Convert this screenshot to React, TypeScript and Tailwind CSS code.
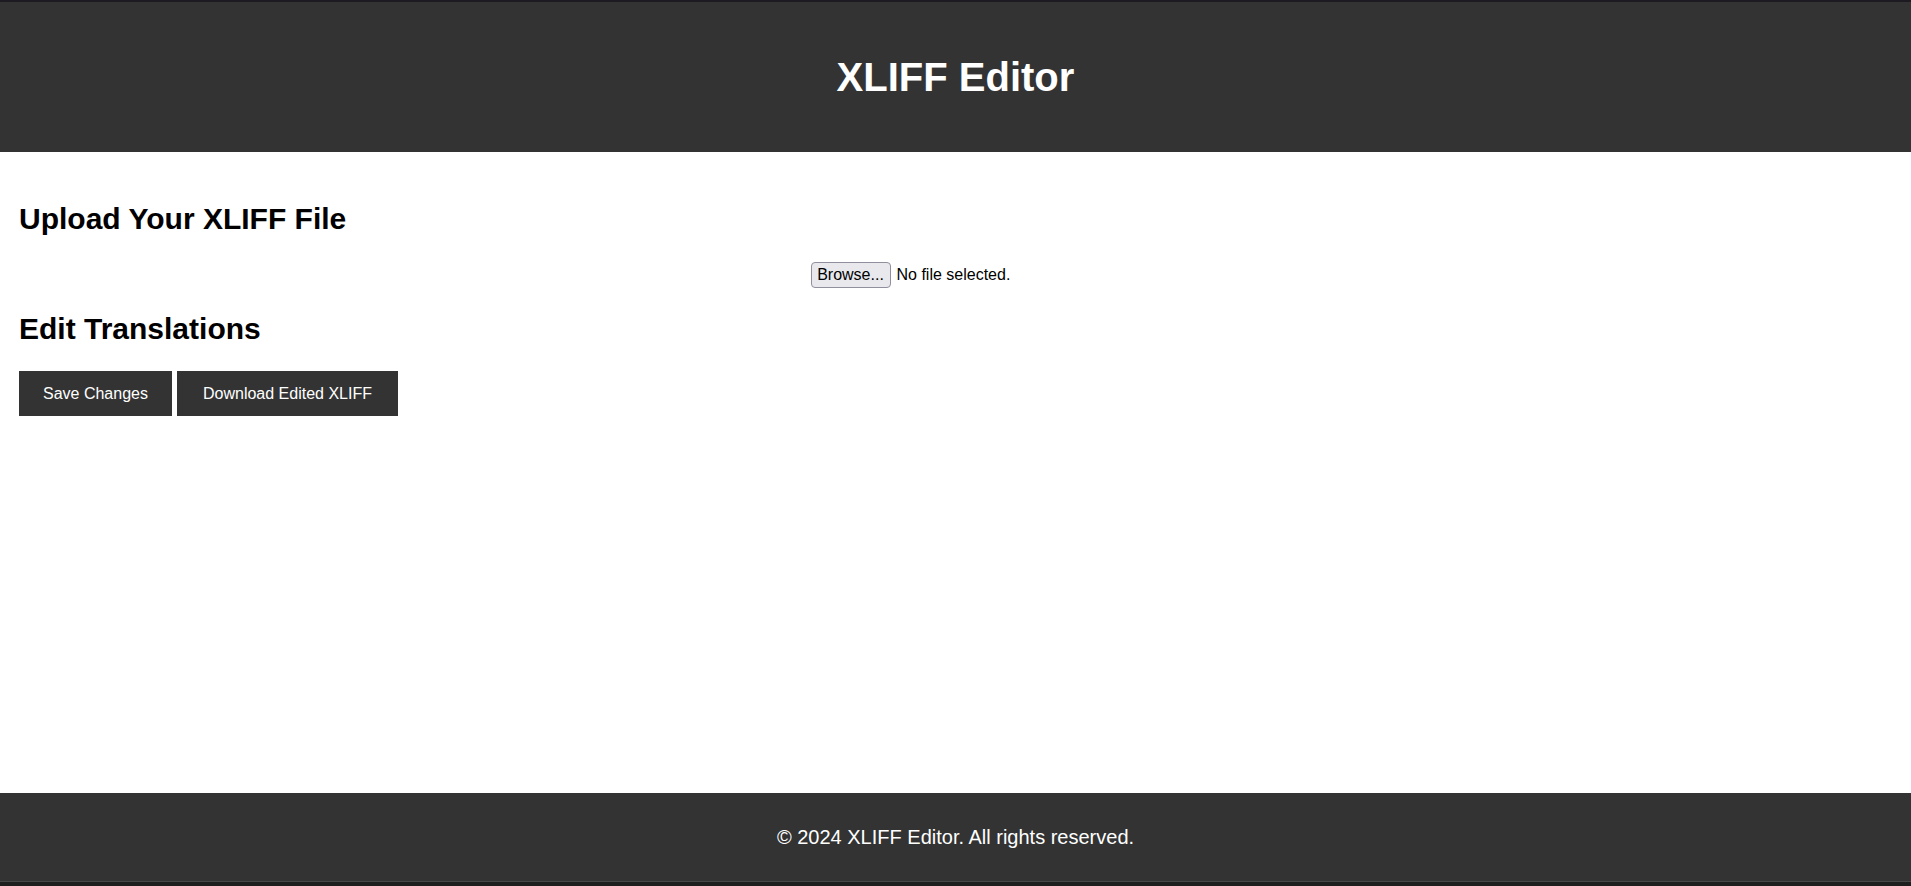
export default function App() {
  return (
    <div className="h-screen flex flex-col bg-white border-t-2 border-[#1d1b21] font-['Liberation_Sans',Arial,sans-serif] text-black">
      {/* Header */}
      <header className="h-[150px] shrink-0 bg-[#333333] flex items-center justify-center">
        <h1 className="text-[40px] leading-none font-bold text-white">XLIFF Editor</h1>
      </header>

      {/* Main */}
      <main className="flex-1 px-[19px] pt-[50px]">
        <h2 className="text-[30px] leading-[34px] font-bold">Upload Your XLIFF File</h2>

        <div className="mt-[26px] w-[290px] mx-auto flex items-center gap-[6px] text-[16px]">
          <span className="h-[26px] w-[80px] flex items-center justify-center bg-[#e9e9ed] border border-[#8f8f9d] rounded-[4px]">
            Browse...
          </span>
          <span>No file selected.</span>
        </div>

        <h2 className="mt-[24px] text-[30px] leading-[34px] font-bold">Edit Translations</h2>

        <div className="mt-[25px] flex gap-[5px]">
          <button className="h-[45px] px-[24px] bg-[#333333] text-white text-[16px]">Save Changes</button>
          <button className="h-[45px] px-[26px] bg-[#333333] text-white text-[16px]">Download Edited XLIFF</button>
        </div>
      </main>

      {/* Footer */}
      <footer className="h-[88px] shrink-0 bg-[#333333] flex items-center justify-center text-white text-[20px]">
        © 2024 XLIFF Editor. All rights reserved.
      </footer>
      <div className="h-px shrink-0 bg-[#474747]"></div>
      <div className="h-[4px] shrink-0 bg-[#1e1e1e]"></div>
    </div>
  )
}
